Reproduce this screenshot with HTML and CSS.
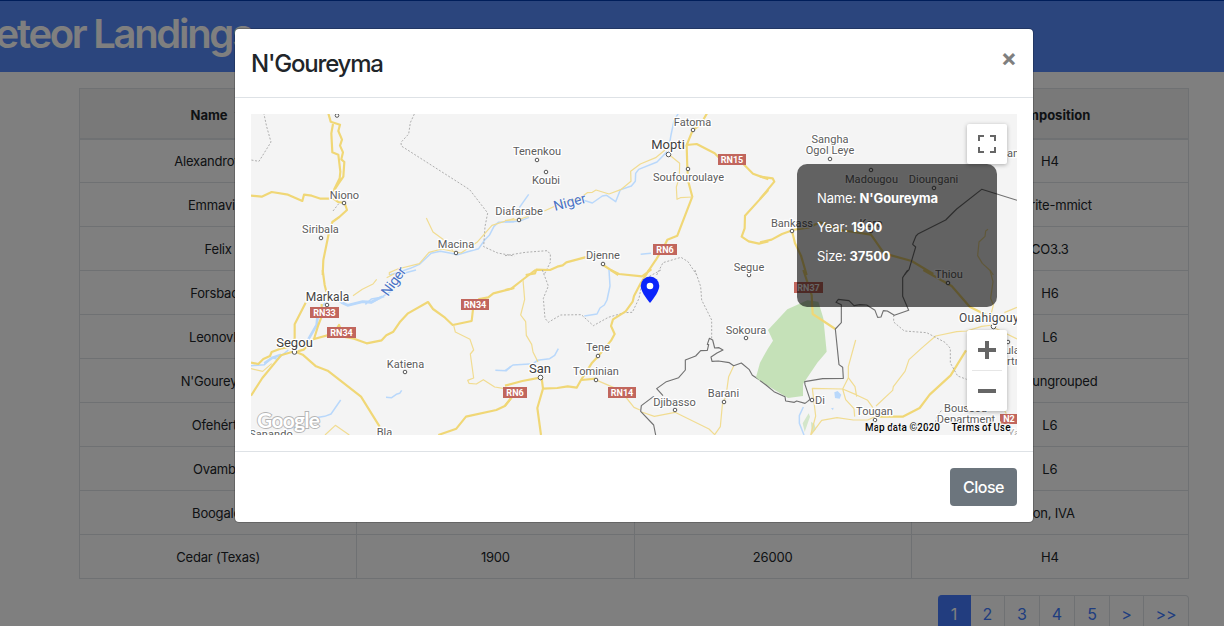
FILE: index.html
```html
<!DOCTYPE html>
<html lang="en">
<head>
<meta charset="utf-8">
<title>Meteor Landings</title>
<link rel="stylesheet" href="styles.css">
</head>
<body>
<header class="banner"><h1 class="banner-title">Meteor Landings</h1></header>
<main class="content">
  <table class="landings">
    <thead><tr><th>Name <span class="sort"></span></th><th></th><th></th><th>Composition</th></tr></thead>
    <tbody>
      <tr><td>Alexandrovsky</td><td></td><td></td><td>H4</td></tr>
      <tr><td>Emmaville</td><td></td><td></td><td>Eucrite-mmict</td></tr>
      <tr><td>Felix</td><td></td><td></td><td>CO3.3</td></tr>
      <tr><td>Forsbach</td><td></td><td></td><td>H6</td></tr>
      <tr><td>Leonovka</td><td></td><td></td><td>L6</td></tr>
      <tr><td>N'Goureyma</td><td></td><td></td><td>Iron, ungrouped</td></tr>
      <tr><td>Ofehértó</td><td></td><td></td><td>L6</td></tr>
      <tr><td>Ovambo</td><td></td><td></td><td>L6</td></tr>
      <tr><td>Boogaldi</td><td></td><td></td><td>Iron, IVA</td></tr>
      <tr><td>Cedar (Texas)</td><td>1900</td><td>26000</td><td>H4</td></tr>
    </tbody>
  </table>
  <nav class="pages">
    <a class="page active">1</a><a class="page">2</a><a class="page">3</a><a class="page">4</a><a class="page">5</a><a class="page">&gt;</a><a class="page">&gt;&gt;</a>
  </nav>
</main>
<div class="backdrop">
  <section class="modal">
    <div class="modal-header">
      <h2 class="modal-title">N'Goureyma</h2>
      <span class="modal-x">×</span>
    </div>
    <div class="modal-body">
      <div class="map">
        <svg class="map-art" viewBox="251 114 766 321" width="766" height="321">
          <g class="tile" transform="translate(251 110) scale(.33333)">
            <path class="water" d="M415 495L440 488 478 475 505 463 540 430 568 424 600 430 620 434 650 425 683 416 701 390 715 376 729 349 742 337 790 335"/>
            <path class="region" d="M38 8L47 50 60 96 24 154 0 150M490 12L478 38 473 72 450 97 451 108 656 239 710 309 702 350 698 410 740 429 790 438"/>
            <path class="road" d="M232 10L239 35 267 44 262 63 273 89 267 107 276 127 271 148 280 156 277 200 262 222 247 245M246 42L241 70 244 127 262 134 268 185 266 205 249 239M0 257L32 260 62 246 111 254 154 273 159 254 182 257 209 266 247 266 262 276 281 279 288 300 265 321 244 336 233 372 217 450 215 495"/>
            <path class="lane" d="M526 324L546 366 580 391 606 422M415 495V488L440 477 505 461 534 427 572 417 630 429 678 397 723 346 790 325"/>
            <path class="region" d="M246 303L264 280"/>
          </g>
          <g class="tile" transform="translate(251 270) scale(.33333)">
            <path class="water" d="M0 287L40 284 63 262 78 268 112 240M172 208L197 165 203 125 222 98M265 95L290 106 335 95 361 99 394 80 425 61M450 12L495 0M343 103L361 87 400 80M405 382L422 383 436 373 446 370 452 361M107 477L133 471 159 449 221 439 240 432 269 390M733 301L766 302 780 289"/>
            <path class="water wide" d="M172 208L197 165 200 135M270 97L290 106 335 95 361 96 394 80M40 280L63 264 90 254"/>
            <path class="road" d="M215 0L221 45 226 65M212 102V140L202 165 189 207 240 193 309 206 347 220 392 211 406 196 427 185 446 157 471 130 531 96 546 117 582 143 605 165 662 153 666 118 684 87 712 82 727 70 790 54M164 98L131 163V205L117 230 92 235 62 246 57 258 37 267 22 282 0 278M0 377L34 324 90 256 130 244 155 254 195 289 230 302 330 380 386 470M140 244L158 239 186 208M562 495L616 476 645 440 736 420 763 407 779 386"/>
            <path class="lane" d="M306 77L334 58 366 42 377 28M407 23L430 11M0 296L35 304 62 281M608 166L613 186 657 208 668 240 658 252 668 324 650 331 654 340 676 342 697 329 731 351 756 355M222 495L253 466 295 495"/>
            <path class="road" d="M256 178L264 165 270 178"/>
          </g>
          <g class="tile" transform="translate(505 110) scale(.33333)">
            <path class="water" d="M520 10L507 32 498 75 494 100M486 125L456 156 401 178 392 190 391 214 379 228 346 239 332 275 305 256 292 258 262 279 226 268M43 293L71 253M0 336L42 334 72 322M407 433L438 430"/>
            <path class="region" d="M0 437L61 427 127 422 136 433 136 457 117 495M455 495L474 458 528 442 549 455 575 495"/>
            <path class="road" d="M606 10L587 43 563 61 545 105 547 175 550 215 562 260 517 377 487 389 478 408 455 446 422 495M545 105L575 102 629 130 646 147M713 160L744 191 790 208M790 240L720 317 719 355 710 380 731 394 762 401 790 394M62 495L90 490 94 479 135 480 157 470 173 466 184 457 240 442 290 440M290 462L340 495"/>
            <path class="lane" d="M480 120L452 143 406 162 377 184 378 214 349 238 312 252 273 240 262 247 247 248 222 266 175 277 118 303M72 318L42 329 0 331M490 117L520 112 545 107M490 132L524 160 523 202 514 231 516 268 526 263 563 261"/>
          </g>
          <g class="tile" transform="translate(505 270) scale(.33333)">
            <path class="water" d="M312 0L315 48 306 90 298 105 285 114 276 132 238 138M0 302L24 285 85 281 97 271 134 266 149 256 160 236"/>
            <path class="region" d="M112 0L130 48 115 85 120 145 130 157 167 135 229 134 265 167 310 142 358 128 382 127 402 85 413 30 468 0M570 0L587 50 590 90 620 150V205"/>
            <path class="road" d="M0 60L19 56 52 30 91 0M317 0L342 12 411 19 437 0 432 0 407 40 387 78 383 95 362 124 324 148 318 168 329 192 318 212 281 257 260 280 228 330 215 353 188 349 157 354 114 356 110 324 105 323M0 347L52 333 105 323M114 356L97 414 108 495M0 407L28 372M230 330L272 326"/>
            <path class="lane" d="M54 30L59 88 47 135 62 155 64 196 80 223 84 246 99 276M276 331L325 352 362 381 387 412 405 420M410 426L448 439 510 427 612 477 629 494 646 470 652 405 663 378 671 320 686 288"/>
            <path class="border" d="M452 495L446 465 407 424 409 407 445 380 453 386M474 377L455 356 484 335 521 323 541 300V270L572 258 587 242 607 241 611 224 607 223 613 205 623 210 629 234 642 233 654 240 636 249 618 261 621 274 640 273 673 278 686 287 709 279 732 298 742 316 764 330 783 332"/>
          </g>
          <g class="tile" transform="translate(760 110) scale(.33333)">
            <path class="road" d="M0 397L35 389 66 372 102 359 148 352 180 337 242 360 333 374 372 430 455 453 520 492M96 363L105 400 123 437 140 495"/>
            <path class="road" d="M0 200L38 205 43 215 0 267"/>
            <path class="lane" d="M684 358L677 363 675 379 657 396 653 437 667 460 692 483 700 495"/>
            <path class="border" d="M771 271L665 238 590 297 557 330 475 371 468 378 458 403 467 411 447 479 433 495"/>
          </g>
          <g class="tile" transform="translate(760 270) scale(.33333)">
            <path class="park" d="M-12 322L0 278 23 237 39 212 24 180 82 118 142 91 175 95 190 145 200 245 172 278 129 342V378L84 384 0 333Z"/>
            <path class="park-bit" d="M128 460L146 430 150 440 134 486ZM153 455L163 462 168 478 155 491Z"/>
            <path class="lake" d="M223 367L233 363 244 374 239 386 225 384ZM213 415L221 413 219 421Z"/>
            <path class="water" d="M130 411L118 437V460L132 495"/>
            <path class="road" d="M130 0L155 75 158 132 226 177M490 0L575 48 629 110 677 134 700 160M345 440H428L479 414 509 374 572 316 618 241"/>
            <path class="lane" d="M690 0L699 35 692 85 700 105 690 145 700 165M733 128L771 112M700 172L771 207M287 210L265 290V323L285 350 290 380M265 323L248 357 157 355 167 438 152 495M248 357L288 374 323 391 338 412 346 440 323 450 280 450 231 443 185 451 153 494M248 357L257 389 282 416 284 440M348 408L398 361 400 350 435 304 447 269 484 235 527 198 590 185 620 183 665 169 700 165M733 420L739 431"/>
            <path class="region" d="M401 135V156L433 183 500 188 555 217 571 235 571 279 593 318 620 328M544 422L531 438 526 460M724 190L744 215"/>
            <path class="border" d="M443 0L428 23V79L446 121 403 136 382 123 370 122 363 141 353 142 345 121 320 105 300 104 282 107 267 92 235 88 228 97 244 104V158L226 177 237 284 248 292 250 325 188 326 134 335 135 344 150 388 143 394 135 400 110 393 103 397 77 393 75 380 42 365 18 345 0 332"/>
          </g>
          <g class="towns">
            <circle cx="337" cy="115.500" r="1.800"/><circle cx="344" cy="203" r="1.800"/><circle cx="321" cy="238" r="1.800"/><circle cx="456" cy="253" r="1.800"/><circle cx="327" cy="305" r="1.800"/><circle cx="294.500" cy="352" r="2.300"/><circle cx="405" cy="372" r="1.800"/>
            <circle cx="537" cy="160" r="1.800"/><circle cx="546" cy="172" r="1.800"/><circle cx="519" cy="220" r="1.800"/><circle cx="693" cy="130" r="1.800"/><circle cx="668.500" cy="154.500" r="2.300"/><circle cx="688" cy="169" r="1.800"/><circle cx="603" cy="264" r="1.800"/><circle cx="749" cy="275" r="1.800"/>
            <circle cx="598" cy="356" r="1.800"/><circle cx="540.500" cy="377.500" r="2.300"/><circle cx="596" cy="380" r="1.800"/><circle cx="746" cy="338" r="1.800"/><circle cx="724" cy="402" r="1.800"/><circle cx="675" cy="410" r="1.800"/>
            <circle cx="830" cy="159" r="1.800"/><circle cx="871" cy="170" r="1.800"/><circle cx="934" cy="188" r="1.800"/><circle cx="792" cy="231" r="1.800"/><circle cx="871" cy="231" r="1.800"/><circle cx="948" cy="283" r="1.800"/><circle cx="993.500" cy="326.500" r="2.300"/><circle cx="875" cy="420" r="1.800"/><circle cx="812" cy="400" r="1.800"/><circle cx="1008" cy="342" r="1.800"/>
          </g>
          <g class="names">
            <text x="344.500" y="199">Niono</text><text x="320.500" y="233">Siribala</text><text x="456" y="248">Macina</text>
            <text class="mid" x="327.500" y="300.500">Markala</text><text class="big" x="294.500" y="347">Segou</text><text x="405.500" y="368">Katiena</text>
            <text x="384.500" y="436">Bla</text><text x="271" y="438">Sanando</text>
            <text x="537" y="155">Tenenkou</text><text x="546" y="184">Koubi</text><text x="519" y="215">Diafarabe</text>
            <text x="692.500" y="126">Fatoma</text><text class="big" x="668" y="149">Mopti</text><text x="688.500" y="181">Soufouroulaye</text>
            <text x="603" y="259">Djenne</text><text x="749" y="271">Segue</text><text x="598" y="351">Tene</text><text class="big" x="540" y="373">San</text>
            <text x="596" y="375">Tominian</text><text x="746" y="334">Sokoura</text><text x="723.500" y="397">Barani</text><text x="674.500" y="406">Djibasso</text>
            <text x="830" y="143">Sangha</text><text x="830" y="154">Ogol Leye</text><text x="871.500" y="183">Madougou</text><text x="933.500" y="183">Dioungani</text>
            <text x="792" y="227">Bankass</text><text x="871" y="227">Koro</text><text x="949" y="278">Thiou</text>
            <text class="mid start" x="959" y="322">Ouahigouya</text><text x="820" y="404">Di</text><text x="874.500" y="415">Tougan</text>
            <text class="start" x="944" y="412">Boussou</text><text x="966" y="423">Department</text>
            <text class="start" x="1007" y="157">an</text><text class="start" x="1005" y="354">ulaye</text><text class="start" x="1007" y="365">rtment</text>
            <text class="faint" x="1014" y="437">Ya</text>
            <text class="river" transform="translate(388 297) rotate(-54)" textLength="32">Niger</text>
            <text class="river" transform="translate(555 211) rotate(-15)" textLength="33">Niger</text>
          </g>
          <g class="shields">
            <rect x="310" y="307" width="29" height="11"/><text x="324.500" y="316">RN33</text>
            <rect x="327" y="327" width="29" height="11"/><text x="341.500" y="335.500">RN34</text>
            <rect x="461" y="299" width="28" height="11"/><text x="475" y="308">RN34</text>
            <rect x="503" y="387" width="24" height="11"/><text x="515" y="396">RN6</text>
            <rect x="718" y="154" width="28" height="11"/><text x="732" y="163">RN15</text>
            <rect x="653" y="244" width="24" height="11"/><text x="665" y="252.500">RN6</text>
            <rect x="608" y="387" width="28" height="11"/><text x="622" y="395.500">RN14</text>
            <rect x="794" y="282" width="29" height="11"/><text x="808.500" y="291">RN37</text>
            <rect x="1000" y="414" width="20" height="10"/><text x="1009" y="422">N2</text>
          </g>
          <path class="pin" d="M650 276.500a9.300 9.300 0 0 0-9.300 9.300c0 6.700 9.300 17.200 9.300 17.200s9.300-10.500 9.300-17.200a9.300 9.300 0 0 0-9.300-9.300z"/>
          <circle cx="650" cy="286" r="3.300" fill="#fff"/>
          <text class="logo" x="257" y="428" textLength="63">Google</text>
          <g class="legal"><text x="865" y="431" textLength="75">Map data ©2020</text><text x="951.500" y="431" textLength="59">Terms of Use</text></g>
        </svg>
        <div class="info">
          <p>Name: <b>N'Goureyma</b></p>
          <p>Year: <b>1900</b></p>
          <p>Size: <b>37500</b></p>
        </div>
        <div class="map-button full">
          <svg width="18" height="18" viewBox="0 0 18 18"><path d="M0 0h6v2H2v4H0zM12 0h6v6h-2V2h-4zM0 12h2v4h4v2H0zM16 12h2v6h-6v-2h4z"/></svg>
        </div>
        <div class="map-button zoom">
          <svg width="18" height="18" viewBox="0 0 18 18"><path d="M7 0h4v7h7v4h-7v7H7v-7H0V7h7z"/></svg>
          <i class="rule"></i>
          <svg width="18" height="18" viewBox="0 0 18 18"><path d="M0 7h18v4H0z"/></svg>
        </div>
      </div>
    </div>
    <div class="modal-footer"><button class="close">Close</button></div>
  </section>
</div>
</body>
</html>
```
FILE: styles.css
```css
* { box-sizing: border-box; }
body { margin: 0; height: 626px; overflow: hidden; background: #fff; color: #212529; font-family: Inter, "Liberation Sans", sans-serif; }
.banner { height: 72px; background: #568afa; border-top: 1px solid #003cb4; overflow: hidden; }
.banner-title { margin: 0 0 0 -39px; font-size: 40px; font-weight: 600; line-height: 65px; letter-spacing: -2.3px; color: #fff; white-space: nowrap; }
.content { padding: 16px 35px 0 79px; }
.landings { width: 1110px; border-collapse: collapse; table-layout: fixed; font-size: 13px; text-align: center; letter-spacing: -0.2px; }
.landings th { height: 50px; padding-top: 4px; background: #f2f2f2; border: 1px solid #dee2e6; border-bottom-width: 2px; font-weight: 700; letter-spacing: 0; }
.landings td { height: 44px; padding: 0; border: 1px solid #dee2e6; }
.sort { display: inline-block; margin: 0 4px 0 3px; border: 4px solid transparent; border-top-color: #bbb; border-bottom: 0; vertical-align: 4px; }
.pages { display: flex; justify-content: flex-end; width: 1110px; margin-top: 16px; }
.page { display: flex; align-items: center; justify-content: center; width: 35px; height: 38px; border: 1px solid #dee2e6; border-left: 0; font-size: 16px; color: #407bff; }
.page:nth-child(2) { width: 34px; }
.page:nth-child(6) { width: 34px; }
.page.active { width: 33px; background: #457bff; border-color: #457bff; color: #fff; border-radius: 4px 0 0 0; }
.page:last-child { width: 45px; border-radius: 0 4px 0 0; }
.backdrop { position: absolute; inset: 0; background: rgba(0,0,0,.5); }
.modal { width: 800px; height: 495px; margin: 28px 0 0 234px; background: #fff; background-clip: padding-box; border: 1px solid rgba(0,0,0,.2); border-radius: 5px; display: flex; flex-direction: column; }
.modal-header { display: flex; justify-content: space-between; height: 69px; padding: 16px; border-bottom: 1px solid #dee2e6; }
.modal-title { margin: 0; font-size: 24px; font-weight: 550; line-height: 37px; letter-spacing: -1.2px; }
.modal-x { font-size: 24px; font-weight: 700; line-height: 25px; color: #7f7f7f; }
.modal-body { padding: 16px; height: 353px; }
.map { position: relative; width: 766px; height: 321px; overflow: hidden; background: #f4f4f4; }
.map-art { display: block; font-family: Roboto, sans-serif; }
.tile path { fill: none; stroke-linejoin: round; }
.tile .road { stroke: #f0d776; stroke-width: 6.500; }
.tile .lane { stroke: #f1dc91; stroke-width: 3.600; }
.tile .water { stroke: #b9d8fb; stroke-width: 4.500; }
.tile .wide { stroke-width: 8; }
.tile .region { stroke: #a8a8a8; stroke-width: 2.800; stroke-dasharray: 6 5; }
.tile .border { stroke: #717171; stroke-width: 3.400; }
.tile .park { fill: #c5e1b8; }
.tile .park-bit { fill: #d3e6ca; }
.tile .lake { fill: #b9d8fb; }
.towns circle { fill: #fff; stroke: #555; stroke-width: 1; }
.names text { font-size: 11px; text-anchor: middle; fill: #5c5c5c; stroke: #fff; stroke-width: 2.500px; stroke-linejoin: round; paint-order: stroke; letter-spacing: .05px; }
.names .mid { font-size: 12px; fill: #444; letter-spacing: .05px; }
.names .mid.start { letter-spacing: .35px; }
.names .big { font-size: 13px; fill: #404040; }
.names .start, .names .river { text-anchor: start; }
.names .faint { fill: #aaa; }
.names .river { font-size: 14px; fill: #4a72c4; stroke-width: 1px; }
.shields rect { fill: #c1665d; }
.shields text { font-size: 9px; font-weight: 700; fill: #fff; text-anchor: middle; }
.pin { fill: #0b24fb; }
.logo { font-family: Lato, sans-serif; font-size: 21px; font-weight: 700; fill: #fff; stroke: #b4b4b4; stroke-width: 1.800px; paint-order: stroke; }
.legal text { font-size: 10px; fill: #000; stroke: #f4f4f4; stroke-width: 3px; paint-order: stroke; }
.legal { font-weight: 500; }
.info { position: absolute; left: 546px; top: 50px; width: 200px; height: 143px; padding: 20px; border-radius: 10px; background: rgba(0,0,0,.6); color: #fff; font-size: 13px; }
.info p { margin: 0; height: 29px; line-height: 29px; letter-spacing: -0.15px; }
.map-button { position: absolute; display: flex; flex-direction: column; align-items: center; background: #fff; border-radius: 2px; box-shadow: 0 1px 4px rgba(0,0,0,.3); left: 716px; width: 40px; }
.map-button path { fill: #666; }
.full { top: 10px; height: 40px; justify-content: center; }
.zoom { top: 216px; height: 81px; padding: 11px 0; justify-content: space-between; }
.rule { width: 30px; height: 1px; background: #e6e6e6; }
.modal-footer { flex: 1; display: flex; justify-content: flex-end; align-items: flex-start; padding: 16px; border-top: 1px solid #dee2e6; }
.close { width: 67px; height: 38px; padding: 0; border: 0; border-radius: 4px; background: #6c757d; color: #fff; font: 500 16px Inter, sans-serif; letter-spacing: -0.5px; }
```
